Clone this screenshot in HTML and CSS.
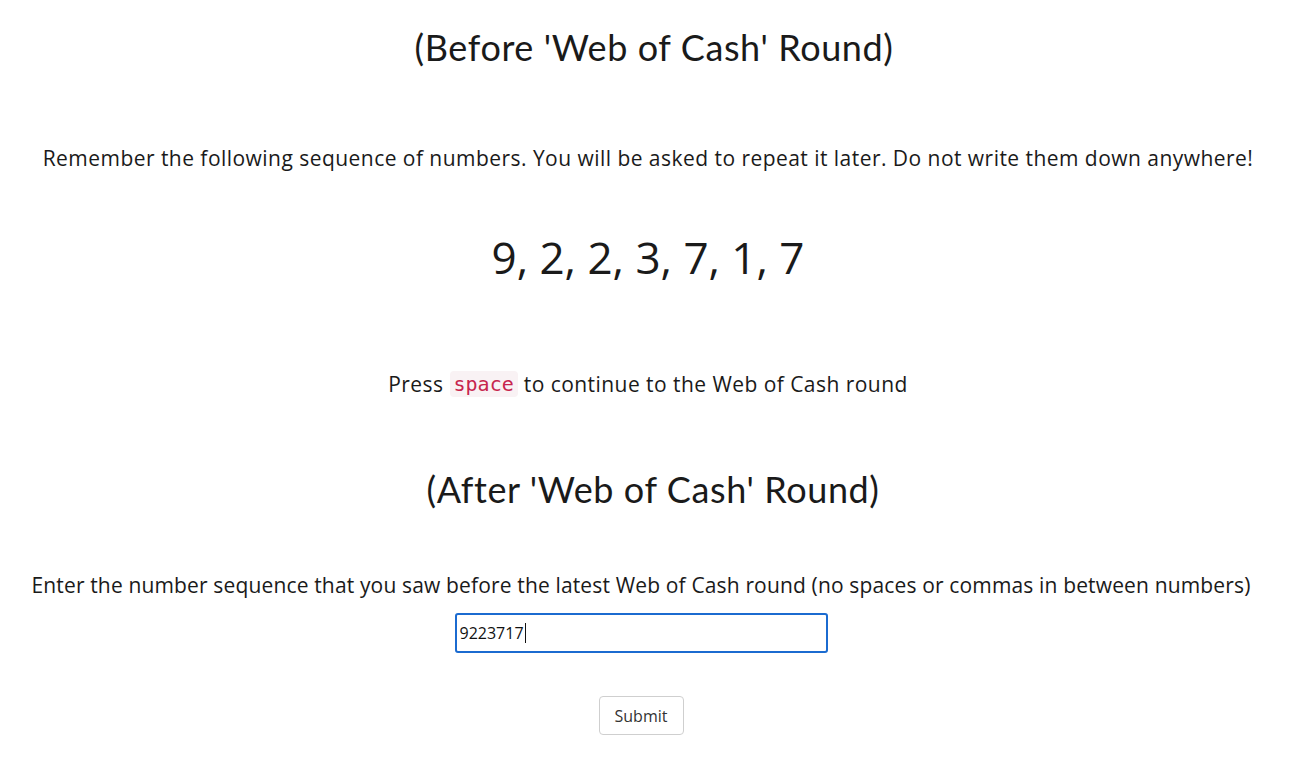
FILE: index.html
```html
<!DOCTYPE html>
<html>
<head>
<meta charset="utf-8">
<link rel="stylesheet" href="styles.css">
</head>
<body>
<main class="page">
  <section class="block block-before">
    <h1 class="title title-before">(Before 'Web of Cash' Round)</h1>
    <p class="text text-remember">Remember the following sequence of numbers. You will be asked to repeat it later. Do not write them down anywhere!</p>
    <p class="numbers">9, 2, 2, 3, 7, 1, 7</p>
    <p class="text text-press">Press <code class="key">space</code> to continue to the Web of Cash round</p>
  </section>
  <section class="block block-after">
    <h1 class="title title-after">(After 'Web of Cash' Round)</h1>
    <div class="form">
      <p class="text text-enter">Enter the number sequence that you saw before the latest Web of Cash round (no spaces or commas in between numbers)</p>
      <div class="field-row"><div class="input">9223717<span class="caret"></span></div></div>
      <div class="button-row"><button class="submit">Submit</button></div>
    </div>
  </section>
</main>
</body>
</html>
```
FILE: styles.css
```css
html, body {
  margin: 0;
  padding: 0;
  background: #ffffff;
}
body {
  font-family: "Open Sans", "Liberation Sans", sans-serif;
  color: #1a1a1a;
}
.page {
  display: flex;
  flex-direction: column;
  align-items: stretch;
  text-align: center;
}
.block {
  display: flex;
  flex-direction: column;
  align-items: center;
}
.block-before {
  padding-right: 4px;
}
.title {
  margin: 0;
  font-family: "Lato", "DejaVu Sans", sans-serif;
  font-weight: 400;
  font-size: 36px;
  line-height: 44px;
  color: #1a1a1a;
  letter-spacing: 0.6px;
  padding-left: 12px;
}
.title-before {
  margin-top: 25px;
}
.text {
  margin: 0;
  font-size: 21px;
  line-height: 28px;
}
.text-remember {
  margin-top: 75px;
  letter-spacing: 0.46px;
}
.numbers {
  margin: 55px 0 0;
  font-size: 44px;
  line-height: 60px;
}
.text-press {
  margin-top: 83px;
  display: flex;
  align-items: center;
  letter-spacing: 0.45px;
}
.key {
  font-family: "DejaVu Sans Mono", monospace;
  font-size: 20px;
  letter-spacing: 0;
  color: #c7254e;
  background: #f9f2f4;
  border-radius: 4px;
  padding: 0 4px;
  margin: 0 6px;
  line-height: 26px;
}
.title-after {
  margin-top: 69px;
  padding-left: 6px;
}
.form {
  display: flex;
  flex-direction: column;
  align-items: center;
  padding-right: 18px;
}
.text-enter {
  margin-top: 60px;
  letter-spacing: 0.15px;
}
.field-row {
  margin-top: 14px;
}
.input {
  box-sizing: border-box;
  width: 373px;
  height: 40px;
  border: 2px solid #1b6bd0;
  border-radius: 3px;
  padding: 0 3px;
  font-size: 16px;
  display: flex;
  align-items: center;
  color: #111;
  text-align: left;
}
.caret {
  display: inline-block;
  width: 1px;
  height: 20px;
  background: #111;
  margin-left: 1px;
}
.button-row {
  margin-top: 43px;
}
.submit {
  box-sizing: border-box;
  width: 85px;
  height: 39px;
  font-family: "Open Sans", sans-serif;
  font-size: 16px;
  color: #333;
  background: #fff;
  border: 1px solid #cfcfcf;
  border-radius: 4px;
}
```
